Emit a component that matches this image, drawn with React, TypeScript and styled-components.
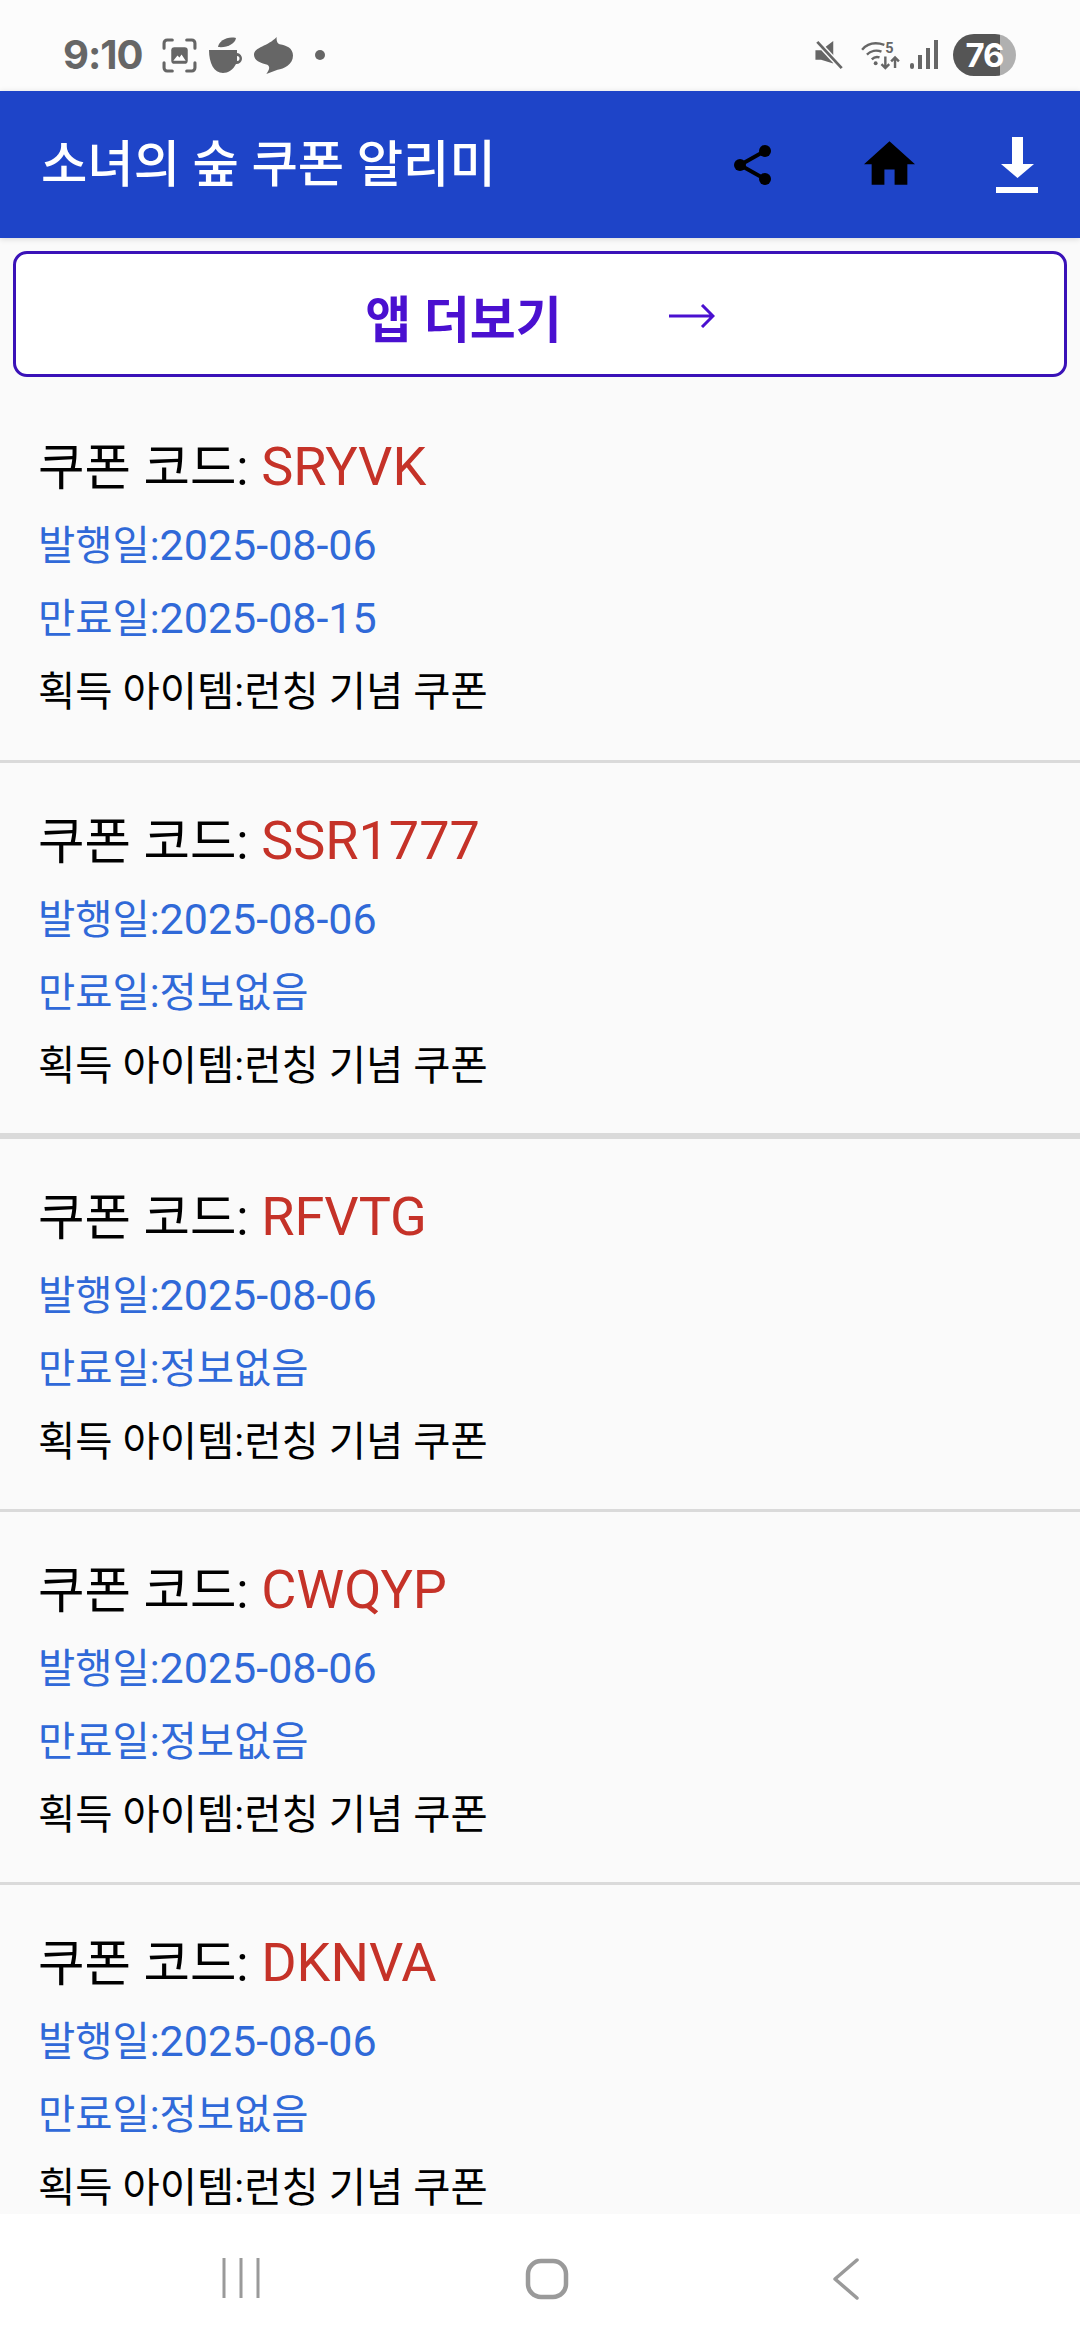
import React from 'react';
import styled, { createGlobalStyle } from 'styled-components';

const Global = createGlobalStyle`
  html, body { margin: 0; padding: 0; background: #fafafa; }
  * { box-sizing: border-box; }
`;

const Screen = styled.div`
  width: 1080px;
  height: 2340px;
  display: flex;
  flex-direction: column;
  overflow: hidden;
  background: #fafafa;
  font-family: Roboto, "Noto Sans CJK KR", sans-serif;
`;

const StatusBar = styled.div`
  height: 91px;
  flex: none;
  display: flex;
  align-items: center;
  justify-content: space-between;
  padding: 19px 64px 0 63px;
  background: #fcfcfc;
`;

const StatusGroup = styled.div<{ $gap: number }>`
  display: flex;
  align-items: center;
  gap: ${(p) => p.$gap}px;
`;

const Clock = styled.span`
  font-family: Inter, Roboto, sans-serif;
  font-size: 40px;
  font-weight: 700;
  line-height: 44px;
  letter-spacing: -1px;
  color: #666;
  margin-right: 7px;
`;

const Battery = styled.div`
  width: 63px;
  height: 42px;
  border-radius: 21px;
  background: linear-gradient(90deg, #555 0, #555 47px, #b0b0b0 47px, #b0b0b0 100%);
  color: #fff;
  font-family: Inter, Roboto, sans-serif;
  font-size: 33px;
  font-weight: 700;
  line-height: 42px;
  text-align: center;
  letter-spacing: -1px;
`;

const AppBar = styled.header`
  position: relative;
  height: 147px;
  flex: none;
  display: flex;
  align-items: center;
  padding: 0 42px 0 41px;
  background: #1e44c8;
  box-shadow: 0 1px 6px rgba(0, 0, 0, 0.14);
`;

const AppTitle = styled.h1`
  flex: 1;
  margin: 0;
  font-size: 50.4px;
  font-weight: 500;
  line-height: 60px;
  color: #fff;
`;

const ToolIcons = styled.div`
  display: flex;
  align-items: center;
  gap: 81px;
`;

const ShareIcon = styled.svg`
  margin-right: 12px;
`;

const HomeIcon = styled.svg`
  margin-top: -4px;
`;

const MoreButton = styled.button`
  flex: none;
  height: 126px;
  margin: 13px 13px 0;
  display: flex;
  align-items: center;
  justify-content: center;
  gap: 107px;
  padding: 3px 0 0 0;
  background: #fff;
  border: 3px solid #3a12b8;
  border-radius: 14px;
  color: #4a10d0;
  font-family: inherit;
  font-size: 50px;
  font-weight: 700;
`;

const List = styled.div`
  flex: 1;
  min-height: 0;
  overflow: hidden;
`;

const Item = styled.article<{ $heavy?: boolean }>`
  height: ${(p) => (p.$heavy ? 376 : 373)}px;
  padding: 43px 38px 0;
  border-bottom: ${(p) => (p.$heavy ? 6 : 3)}px solid #dadada;
  &:first-child { height: 386px; padding-top: 55px; }
  &:last-child { border-bottom: 0; }
`;

const CodeLine = styled.div`
  font-size: 50.5px;
  line-height: 72px;
  color: #000;
  margin-bottom: 12px;
`;

const Code = styled.span`
  font-size: 54px;
  line-height: 1;
  color: #c53228;
`;

const DateLine = styled.div`
  font-size: 40.5px;
  line-height: 60px;
  color: #3069d8;
  margin-bottom: 13px;
`;

const Digits = styled.span`
  font-size: 43px;
  line-height: 1;
`;

const RewardLine = styled.div`
  font-size: 40.5px;
  line-height: 60px;
  color: #000;
  margin-top: 1px;
`;

const NavBar = styled.nav`
  height: 126px;
  flex: none;
  background: #fff;
  display: flex;
  align-items: flex-start;
  justify-content: space-between;
  padding: 44px 221px 0 222px;
`;

const coupons = [
  { code: 'SRYVK', end: '2025-08-15' },
  { code: 'SSR1777', heavy: true },
  { code: 'RFVTG' },
  { code: 'CWQYP' },
  { code: 'DKNVA' },
];

export default function App() {
  return (
    <Screen>
      <Global />
      <StatusBar>
        <StatusGroup $gap={12}>
          <Clock>9:10</Clock>
          <svg width="35" height="35" viewBox="0 0 34 34" fill="none">
            <path d="M2 10V5a3 3 0 0 1 3-3h5M24 2h5a3 3 0 0 1 3 3v5M32 24v5a3 3 0 0 1-3 3h-5M10 32H5a3 3 0 0 1-3-3v-5" stroke="#666" strokeWidth="3" strokeLinecap="round" />
            <rect x="9" y="9" width="16" height="16" rx="3" fill="#666" />
            <path d="M11 22l4-5 2 2 2-3 4 6z" fill="#fff" />
          </svg>
          <svg width="37" height="37" viewBox="0 0 37 37">
            <path d="M9 10C10 4 18-1 27 1c-1 6-9 10-18 9z" fill="#666" />
            <path d="M0 13h28v3a5.500 5.500 0 1 1-1 11c-3 6-8 9-13 9C5 36 0 26 0 13zm28 6v5a2.500 2.500 0 0 0 0-5z" fill="#666" fillRule="evenodd" />
          </svg>
          <svg width="39" height="37" viewBox="0 0 38 36" style={{ marginLeft: -4 }}>
            <path d="M22 0c0 3 0 6 3 7 7 1 13 4 13 11 0 9-9 13-15 14l-11 4c3-4 4-7 1-9C6 25 0 23 0 17 0 10 14 9 22 0z" fill="#666" />
          </svg>
          <svg width="10" height="10" viewBox="0 0 10 10" style={{ marginLeft: 10 }}>
            <circle cx="5" cy="5" r="5" fill="#666" />
          </svg>
        </StatusGroup>
        <StatusGroup $gap={15}>
          <svg width="29" height="30" viewBox="0 0 30 32">
            <path d="M0 11h6L19 1v24L6 21H0z" fill="#666" />
            <path d="M2 2l26 28" stroke="#fcfcfc" strokeWidth="6" />
            <path d="M2 2l26 28" stroke="#666" strokeWidth="3" />
          </svg>
          <svg width="39" height="31" viewBox="0 0 40 32" fill="none" stroke="#666" strokeWidth="2.500" style={{ marginLeft: 2 }}>
            <path d="M1 10C7 3 15 2 24 5M6 15c4-4 10-5 15-3M11 20c2-2 5-3 8-2" />
            <circle cx="15" cy="24" r="2" fill="#666" stroke="none" />
            <path d="M25 17v12m-4-4 4 4 4-4M35 29V18m-4 4 4-4 4 4" />
            <text x="25" y="13" fontSize="15" fontWeight="700" fill="#666" stroke="none" fontFamily="Roboto">5</text>
          </svg>
          <svg width="28" height="30" viewBox="0 0 28 30" fill="#666" style={{ marginLeft: -5 }}>
            <rect x="0" y="23" width="4" height="6" rx="2" />
            <rect x="8" y="15" width="4" height="14" />
            <rect x="16" y="8" width="4" height="21" />
            <rect x="24" y="0" width="4" height="29" />
          </svg>
          <Battery>76</Battery>
        </StatusGroup>
      </StatusBar>
      <AppBar>
        <AppTitle>소녀의 숲 쿠폰 알리미</AppTitle>
        <ToolIcons>
          <ShareIcon width="37" height="40" viewBox="0 0 37 40">
            <path d="M6 20L31 6M6 20l25 14" stroke="#000" strokeWidth="4" />
            <circle cx="6" cy="20" r="6" />
            <circle cx="31" cy="6" r="6" />
            <circle cx="31" cy="34" r="6" />
          </ShareIcon>
          <HomeIcon width="51" height="44" viewBox="2 3 20 17">
            <path d="M10 20v-6h4v6h5v-8h3L12 3 2 12h3v8z" />
          </HomeIcon>
          <svg width="42" height="56" viewBox="0 0 42 56" fill="#fff">
            <path d="M16 0h11v27h11L21.500 41 5 27h11z" />
            <rect x="0" y="50" width="42" height="6" />
          </svg>
        </ToolIcons>
      </AppBar>
      <MoreButton>
        <span>앱 더보기</span>
        <svg width="46" height="24" viewBox="0 0 46 24" fill="none" stroke="#4a10d0" strokeWidth="3">
          <path d="M0 12h44M33 1l11 11-11 11" />
        </svg>
      </MoreButton>
      <List>
        {coupons.map((c) => (
          <Item key={c.code} $heavy={c.heavy}>
            <CodeLine>쿠폰 코드: <Code>{c.code}</Code></CodeLine>
            <DateLine>발행일:<Digits>2025-08-06</Digits></DateLine>
            <DateLine>만료일:{c.end ? <Digits>{c.end}</Digits> : '정보없음'}</DateLine>
            <RewardLine>획득 아이템:런칭 기념 쿠폰</RewardLine>
          </Item>
        ))}
      </List>
      <NavBar>
        <svg width="38" height="40" viewBox="0 0 38 40" stroke="#9a9a9a" strokeWidth="3">
          <path d="M2 0v40M19 0v40M36 0v40" />
        </svg>
        <svg width="44" height="42" viewBox="0 0 44 42" fill="none" stroke="#9a9a9a" strokeWidth="4.500">
          <rect x="3" y="3" width="38" height="36" rx="13" />
        </svg>
        <svg width="26" height="42" viewBox="0 0 26 42" fill="none" stroke="#9a9a9a" strokeWidth="3.500" strokeLinecap="round" strokeLinejoin="round">
          <path d="M24 2L2 21l22 19" />
        </svg>
      </NavBar>
    </Screen>
  );
}
